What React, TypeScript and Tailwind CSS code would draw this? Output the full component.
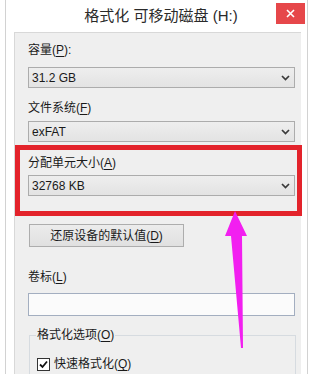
const Chevron = () => (
  <svg width="9" height="6" viewBox="0 0 9 6" className="shrink-0">
    <polyline points="1,1 4.5,4.5 8,1" fill="none" stroke="#3a3a3a" strokeWidth="1.7" />
  </svg>
);

const Combo = ({ value }: { value: string }) => (
  <div className="flex h-[21px] items-center justify-between border border-[#acacac] bg-gradient-to-b from-[#eeeeee] to-[#e3e3e3] pl-[3px] pr-[4px] text-[12px] leading-[16px] text-[#1a1a1a]">
    <span>{value}</span>
    <Chevron />
  </div>
);

const Key = ({ k }: { k: string }) => <span className="underline underline-offset-2">{k}</span>;

const App = () => {
  return (
    <div
      className="relative h-[374px] w-[310px] overflow-hidden bg-white text-[#1a1a1a]"
      style={{ fontFamily: '"Liberation Sans", "Noto Sans CJK SC", sans-serif' }}
    >
      <div className="ml-[5px] mr-[2px] flex h-full flex-col border-x border-[#d2d2d2]">
        <div className="flex h-[32px] shrink-0 items-center justify-center pl-[9px] text-[15px] text-[#2a2a2a]">
          格式化 可移动磁盘 (H:)
        </div>

        <div className="ml-[8px] mr-[6px] flex-1 border-l border-t border-[#d8d8d8] bg-[#efefef] pl-[13px] pr-[6px] pt-[9px] text-[12px] leading-[16px]">
          <div>
            容量(<Key k="P" />):
          </div>
          <div className="mt-[9px]">
            <Combo value="31.2 GB" />
          </div>

          <div className="mt-[12px]">
            文件系统(<Key k="F" />)
          </div>
          <div className="mt-[5px]">
            <Combo value="exFAT" />
          </div>

          <div className="-ml-[13px] -mr-[7px] mt-[3px] border-[5px] border-[#e3232b] pb-[15px] pl-[8px] pr-[2px] pt-[5px]">
            <div>
              分配单元大小(<Key k="A" />)
            </div>
            <div className="mt-[4px]">
              <Combo value="32768 KB" />
            </div>
          </div>

          <button className="ml-[1px] mt-[8px] flex h-[23px] w-[155px] items-center justify-center border border-[#adadad] bg-gradient-to-b from-[#ececec] to-[#e0e0e0] text-[12px]">
            还原设备的默认值(<Key k="D" />)
          </button>

          <div className="mt-[22px]">
            卷标(<Key k="L" />)
          </div>
          <div className="mt-[8px] h-[23px] border border-[#a3aec0] bg-[#fbfbfb]" />

          <fieldset className="ml-[1px] -mr-[1px] mt-[11px] border border-[#d6dbe0] pb-[20px]">
            <legend className="ml-[6px] px-[1px]">
              格式化选项(<Key k="O" />)
            </legend>
            <div className="ml-[7px] mt-[13px] flex items-center gap-[4px]">
              <span className="flex h-[13px] w-[13px] items-center justify-center border border-[#333333] bg-white">
                <svg width="9" height="9" viewBox="0 0 9 9">
                  <polyline points="1,4.5 3.5,7 8,1.5" fill="none" stroke="#111111" strokeWidth="1.8" />
                </svg>
              </span>
              <span>
                快速格式化(<Key k="Q" />)
              </span>
            </div>
          </fieldset>
        </div>
      </div>

      <div className="absolute left-[276px] top-[3px] flex h-[21px] w-[29px] items-center justify-center bg-[#e6474a]">
        <svg width="9" height="9" viewBox="0 0 9 9">
          <path d="M1 1L8 8M8 1L1 8" stroke="#ffffff" strokeWidth="1.6" />
        </svg>
      </div>

      <svg className="pointer-events-none absolute left-0 top-0" width="310" height="374" viewBox="0 0 310 374">
        <polygon points="235,211 247,236 242,236 243,348 241,348 231,236 225,236" fill="#f21ff0" />
      </svg>
    </div>
  );
};

export default App;
